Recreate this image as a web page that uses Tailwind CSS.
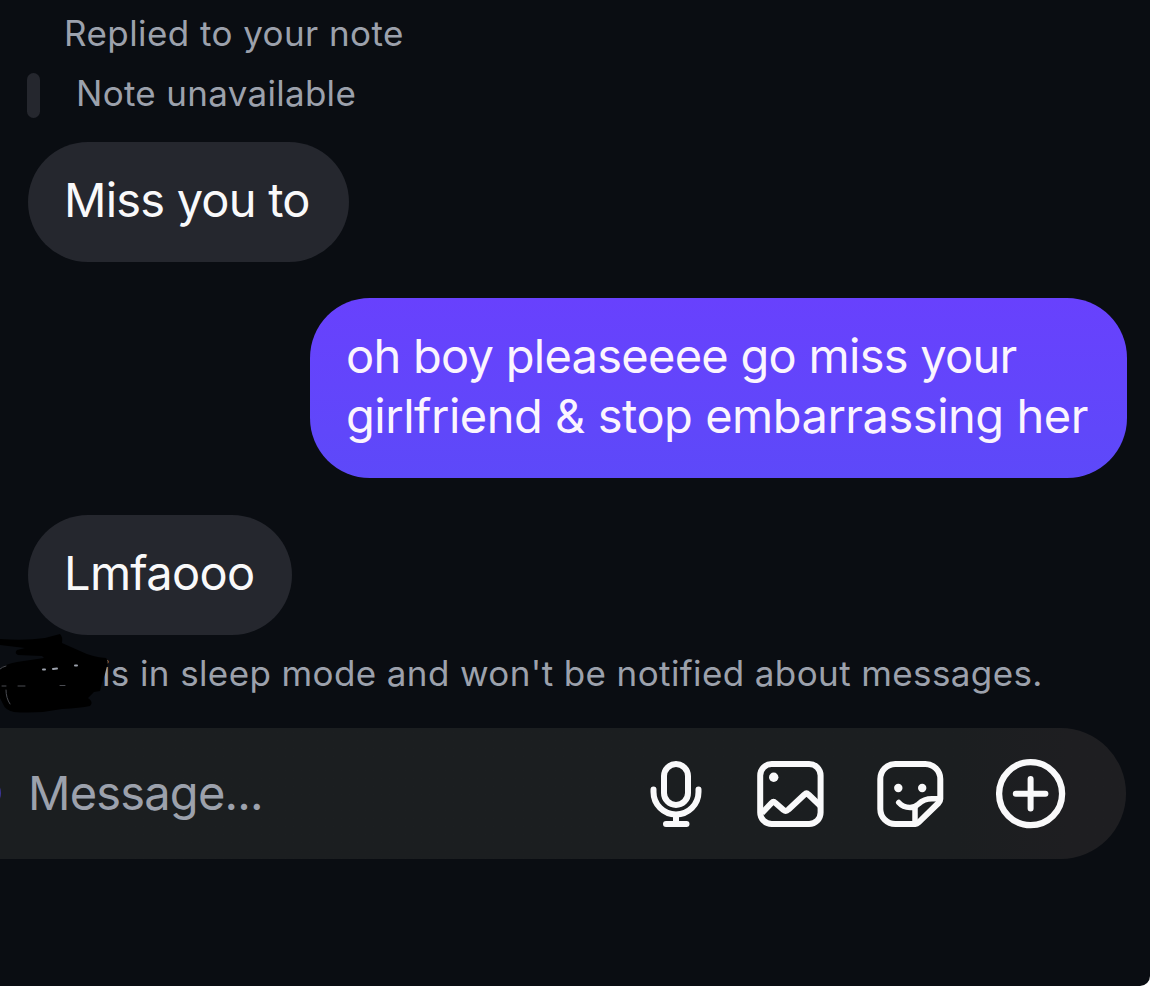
<!DOCTYPE html>
<html lang="en">
<head>
    <meta charset="UTF-8">
    <meta name="viewport" content="width=device-width, initial-scale=1.0">
    <title>Messages</title>
    <script src="https://cdn.jsdelivr.net/npm/@tailwindcss/browser@4"></script>
</head>
<body class="bg-white font-['Inter',sans-serif] overflow-hidden">

    <div class="w-[1150px] h-[986px] flex flex-col bg-[#0a0d12] rounded-br-[10px] overflow-hidden whitespace-nowrap">

        <!-- Conversation -->
        <main class="flex flex-col h-[728px] shrink-0 pt-[11px]">
            <p class="ml-[64px] text-[35px] leading-[44px] tracking-[0.43px] text-[#9ca1ac]">Replied to your note</p>

            <div class="mt-[16px] ml-[27px] flex gap-[36px]">
                <span class="mt-[2px] w-[13px] h-[45px] rounded-full bg-[#25272e]"></span>
                <p class="text-[35px] leading-[44px] tracking-[0.3px] text-[#9ca1ac]">Note unavailable</p>
            </div>

            <div class="mt-[24px] ml-[27.5px] w-[321px] h-[120px] shrink-0 rounded-[60px] bg-[#25272e] pt-[28px] pl-[36.5px]">
                <p class="text-[47px] leading-[60px] tracking-[-0.8px] text-[#f9f9fa]">Miss you to</p>
            </div>

            <div class="mt-[36px] mr-[23.5px] self-end w-[816.5px] h-[180px] shrink-0 rounded-[60px] bg-linear-to-b from-[#6841fd] to-[#5d49f9] pt-[28px] pl-[36px] text-[47px] leading-[60px] text-[#fbf5fe]">
                <p class="tracking-[-0.73px]">oh boy pleaseeee go miss your</p>
                <p class="tracking-[-0.48px]">girlfriend &amp; stop embarrassing her</p>
            </div>

            <div class="mt-[37px] ml-[27.5px] w-[264px] h-[120px] shrink-0 rounded-[60px] bg-[#25272e] pt-[28px] pl-[36.5px]">
                <p class="text-[47px] leading-[60px] tracking-[-0.7px] text-[#f9f9fa]">Lmfaooo</p>
            </div>

            <!-- Sleep mode notice, the name is scribbled out -->
            <div class="relative mt-[16px] pl-[102px]">
                <p class="text-[35px] leading-[44px] tracking-[0.39px] text-[#9ca1ac]">is in sleep mode and won't be notified about messages.</p>
                <svg class="absolute left-0 -top-[26px]" width="130" height="100" viewBox="0 625 130 100" fill="#000">
                    <path d="M0 639Q25 641 45 638L60 634Q63 637 62 643L80 651Q92 657 106 658Q109 661 107 666L105 674L102 683L100 691L94 692L88 698Q94 702 90 706Q80 708 62 709Q38 714 14 712Q5 710 3 704L0 698V669Q5 664 17 662L44 658L42 656L18 655Q14 653 17 650L25 648L0 645Z"/>
                    <path d="M0 669Q2 667 6 666M2 686h4M18 686h7M60 685.500h5M6 690Q6 698 10 704" stroke="#4a4c52" stroke-width="1" fill="none" stroke-linecap="round"/>
                    <path d="M43 669.500h2M53 669l4-.5M75 665.500h2" stroke="#9ca1ac" stroke-width="2" stroke-linecap="round"/>
                </svg>
            </div>
        </main>

        <!-- Composer -->
        <footer class="relative w-[1126px] h-[131px] shrink-0 rounded-r-[66px] bg-linear-to-r from-[#1b1e20] from-85% to-[#1e1e21] to-95% flex items-center">
            <span class="absolute -left-[29px] top-[50px] size-[30px] rounded-full bg-[#3d3597]"></span>
            <p class="pl-[28px] pb-[2px] w-[646px] text-[47px] leading-[60px] tracking-[-0.8px] text-[#9ca1ac]">Message...</p>

            <svg class="shrink-0" width="60" height="80" viewBox="646 754 60 80" fill="none" stroke="#f9f9fa" stroke-width="6" stroke-linecap="round">
                <rect x="664" y="764" width="24" height="41" rx="12"/>
                <path d="M653.5 789.5V792a22.5 22.5 0 0 0 45 0V789.5M676 815V824M666 824H686.5"/>
            </svg>

            <svg class="ml-[44px] shrink-0" width="80" height="80" viewBox="750 754 80 80" fill="none" stroke="#f9f9fa" stroke-width="6" stroke-linejoin="round">
                <rect x="760.2" y="764" width="60.4" height="60" rx="11.5"/>
                <path d="M762 813L771.5 803Q773.5 801 775.500 803L783.500 810Q786 812 788.500 809.500L804.500 794.500Q806.500 792.500 808.500 794.500L820 805.500"/>
                <circle cx="773.7" cy="777.3" r="4.7" fill="#f9f9fa" stroke="none"/>
            </svg>

            <svg class="ml-[40px] shrink-0" width="80" height="80" viewBox="870 754 80 80" fill="none" stroke="#f9f9fa" stroke-width="6" stroke-linecap="round" stroke-linejoin="round">
                <path d="M940.3 799V779a15 15 0 0 0-15-15H895.3a15 15 0 0 0-15 15V809a15 15 0 0 0 15 15H915.5Q917 824 918.5 822.5L938.5 803Q940.3 801 940.3 799Z"/>
                <path d="M898.7 802.5Q903 807.5 910 807.5Q914.5 807.5 918.5 804Q924 798.8 932 798.8H939M915 822V809Q915 806.5 916.5 805.5" stroke-width="5.5"/>
                <g fill="#f9f9fa" stroke="none">
                    <circle cx="898.3" cy="788" r="4.2"/>
                    <circle cx="922.2" cy="788" r="4.2"/>
                </g>
            </svg>

            <svg class="ml-[40px] shrink-0" width="80" height="80" viewBox="990 754 80 80" fill="none" stroke="#f9f9fa" stroke-width="6.3" stroke-linecap="round">
                <circle cx="1030.6" cy="793.7" r="31.5"/>
                <path d="M1030.6 779V808.5M1015.8 793.7H1045.4" stroke-width="6"/>
            </svg>
        </footer>
    </div>

</body>
</html>
